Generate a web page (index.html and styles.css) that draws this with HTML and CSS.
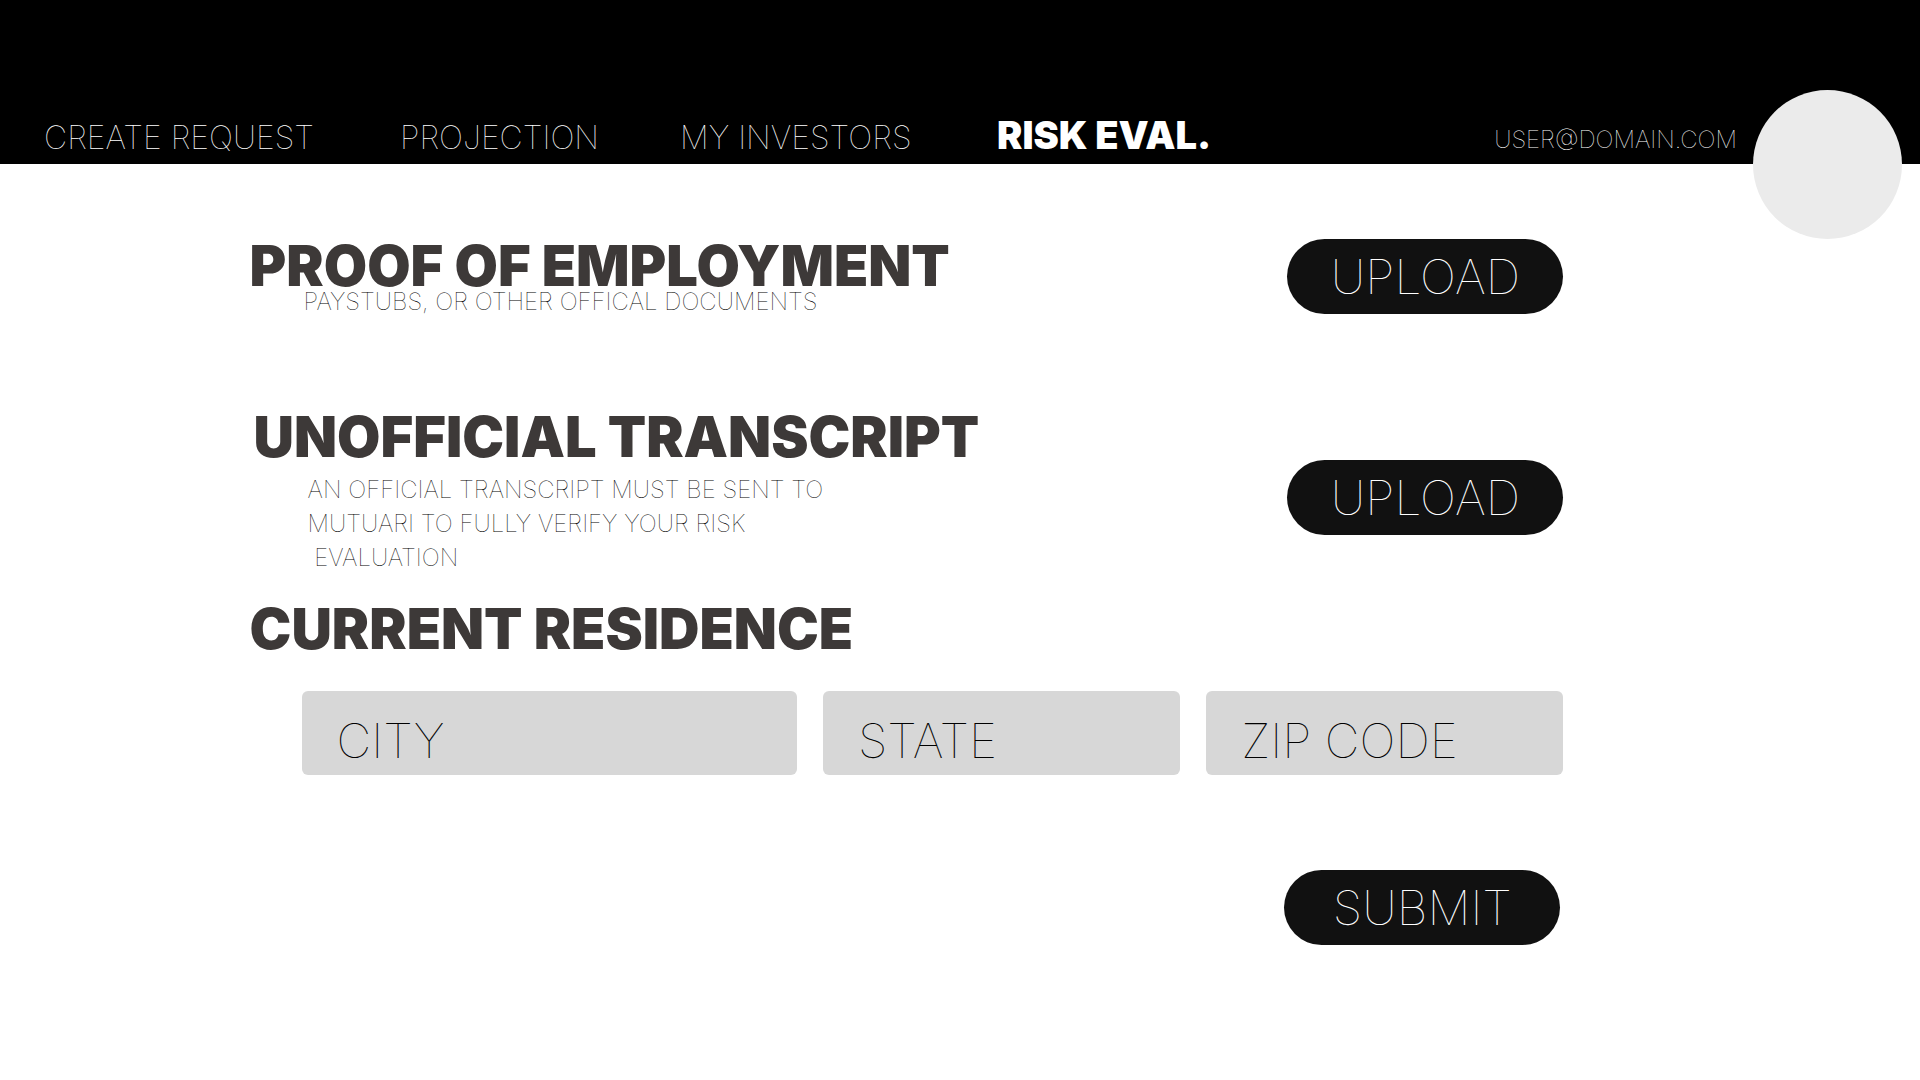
FILE: index.html
```html
<!DOCTYPE html>
<html lang="en">
<head>
<meta charset="utf-8">
<meta name="viewport" content="width=device-width, initial-scale=1">
<title>Risk Eval.</title>
<link rel="stylesheet" href="styles.css">
</head>
<body>
<header class="topbar">
  <nav class="nav">
    <a class="nav-link" href="#">CREATE REQUEST</a>
    <a class="nav-link" href="#">PROJECTION</a>
    <a class="nav-link" href="#">MY INVESTORS</a>
    <a class="nav-link current" href="#" aria-current="page">RISK EVAL.</a>
  </nav>
  <div class="account">
    <span class="email">USER@DOMAIN.COM</span>
    <span class="avatar"></span>
  </div>
</header>
<main>
  <form class="form">
    <section class="item">
      <div>
        <h2 class="title">PROOF OF EMPLOYMENT</h2>
        <p class="note">PAYSTUBS, OR OTHER OFFICAL DOCUMENTS</p>
      </div>
      <button class="pill" type="button">UPLOAD</button>
    </section>
    <section class="item item-long">
      <div>
        <h2 class="title">UNOFFICIAL TRANSCRIPT</h2>
        <p class="note">AN OFFICIAL TRANSCRIPT MUST BE SENT TO<br>MUTUARI TO FULLY VERIFY YOUR RISK<br>&nbsp;EVALUATION</p>
      </div>
      <button class="pill" type="button">UPLOAD</button>
    </section>
    <section class="residence">
      <h2 class="title">CURRENT RESIDENCE</h2>
      <div class="fields">
        <input class="field" type="text" placeholder="CITY" aria-label="City">
        <input class="field" type="text" placeholder="STATE" aria-label="State">
        <input class="field" type="text" placeholder="ZIP CODE" aria-label="Zip code">
      </div>
    </section>
    <button class="pill submit" type="submit">SUBMIT</button>
  </form>
</main>
</body>
</html>
```
FILE: styles.css
```css
* {
  box-sizing: border-box;
}

body {
  margin: 0;
  background: #fff;
  color: #3d3938;
  font-family: Inter, "Liberation Sans", sans-serif;
  font-weight: 100;
}

.topbar {
  display: flex;
  justify-content: space-between;
  align-items: flex-end;
  height: 164px;
  padding: 0 18px 0 44px;
  background: #000;
  color: #fff;
}

.nav {
  display: grid;
  grid-template-columns: 356px 280px 317px auto;
  align-items: baseline;
  padding-bottom: 4px;
}

.nav-link {
  color: #fff;
  font-size: 32px;
  line-height: 44px;
  text-decoration: none;
  white-space: nowrap;
}

.nav-link.current {
  font-size: 38px;
  font-weight: 900;
}

.account {
  display: flex;
  align-items: flex-end;
  gap: 16px;
}

.email {
  padding-bottom: 8px;
  font-size: 24px;
  line-height: 32px;
}

/* The avatar hangs over the lower edge of the bar. */
.avatar {
  width: 149px;
  height: 149px;
  margin-bottom: -75px;
  border-radius: 50%;
  background: #ebebeb;
}

.form {
  display: flex;
  flex-direction: column;
  width: 69%;
  margin: 0 0 0 13%;
  padding: 75px 11px 0 0;
}

.item {
  display: flex;
  justify-content: space-between;
  align-items: flex-end;
  margin-bottom: 99px;
}

.title {
  margin: 0;
  font-size: 56px;
  font-weight: 900;
  line-height: 48px;
}

.note {
  margin: 0;
  padding-left: 54px;
  color: #000;
  font-size: 24px;
  line-height: 24px;
}

.item-long {
  align-items: center;
  margin-bottom: 24px;
  padding-left: 4px;
}

.item-long .note {
  padding-top: 12px;
  padding-bottom: 6px;
  line-height: 34px;
}

.pill {
  width: 276px;
  height: 75px;
  padding: 0;
  border: 0;
  border-radius: 38px;
  background: #111;
  color: #fff;
  font: inherit;
  font-size: 48px;
}

.fields {
  display: grid;
  grid-template-columns: 495fr 357fr 357fr;
  gap: 26px;
  margin-top: 38px;
  padding-left: 52px;
}

.field {
  width: 100%;
  min-width: 0;
  height: 84px;
  padding: 14px 16px 0 35px;
  border: 0;
  border-radius: 6px;
  background: #d7d7d7;
  color: #000;
  font: inherit;
  font-size: 48px;
}

.field::placeholder {
  color: #000;
  opacity: 1;
}

.submit {
  align-self: flex-end;
  margin-top: 95px;
  margin-right: 3px;
}
```
